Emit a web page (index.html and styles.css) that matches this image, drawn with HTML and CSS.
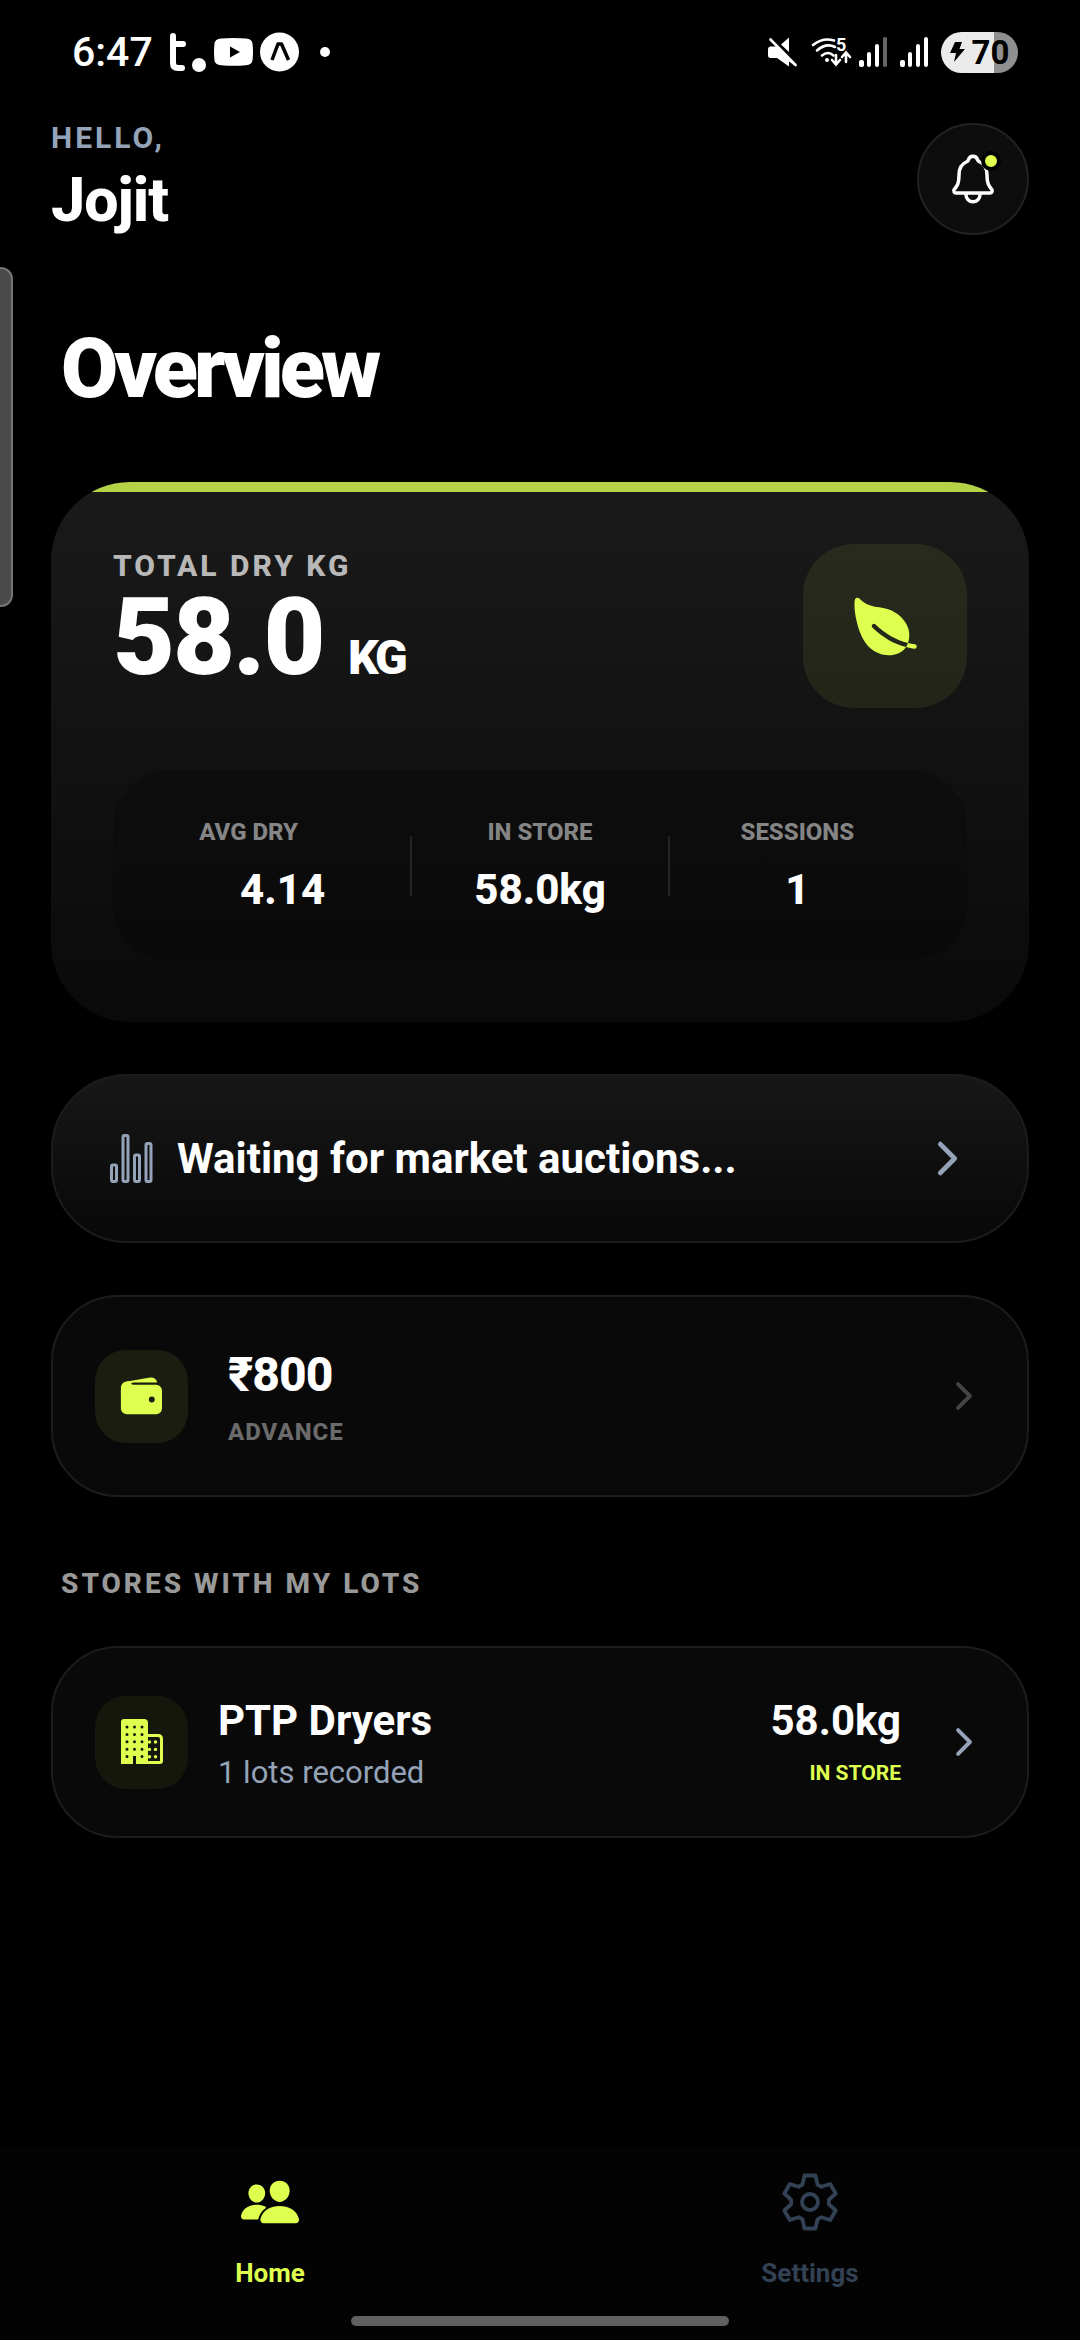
FILE: index.html
```html
<!DOCTYPE html>
<html lang="en">
<head>
<meta charset="utf-8">
<meta name="viewport" content="width=device-width, initial-scale=1">
<title>Overview</title>
<link rel="stylesheet" href="styles.css">
</head>
<body>
<div class="status">
  <div class="status-left">
    <span class="clock">6:47</span>
    <svg class="app-logo" width="39" height="40" viewBox="0 0 39 40" fill="none" stroke="#fff" stroke-width="6" stroke-linecap="round"><path d="M5 4v27q0 5 5 5h4M6 12h9"/><circle cx="31" cy="33" r="7" fill="#fff" stroke="none"/></svg>
    <svg width="39" height="40" viewBox="0 0 39 40"><path fill="#fff" d="M7 6.600Q19.500 5.400 32 6.600q6 0.400 6.500 5 1 8.400 0 17-0.500 4-6.500 4.700-12.500 1-25 0-6-0.700-6.500-4.700-1-8.600 0-17 0.500-4.600 6.500-5z"/><path d="M16 14.500v11l10-5.500z"/></svg>
    <svg width="39" height="40" viewBox="0 0 39 40"><circle cx="19.500" cy="20" r="19.500" fill="#fff"/><path d="M12 28l6-16h3.500l7 16" fill="none" stroke="#000" stroke-width="3.500" stroke-linejoin="round"/></svg>
    <span class="more-dot"></span>
  </div>
  <div class="status-right">
    <svg class="mute" width="30" height="30" viewBox="0 0 30 30"><path fill="#fff" d="M1 12q0-2 2-2.500h7.500l17 19L22 24.500V29.500L10 21H3q-2-.5-2-2.500zM14 7.500L22 .5V15z"/><path d="M3.500 2.500L28.500 28" stroke="#fff" stroke-width="2.600" stroke-linecap="round"/></svg>
    <svg class="wifi" width="40" height="30" viewBox="0 0 40 30" fill="none" stroke="#fff" stroke-width="2.600" stroke-linecap="round"><path d="M2 8Q12 0 23 3.500M6 13.500q9-8 18-3.500M11 18.500q6-5 11.500 0"/><circle cx="16" cy="23" r="2" fill="#fff" stroke="none"/><path d="M25 18v9m-4-4l4 4.500 4-4.500M35 25v-9m-4 4l4-4.500 4 4.500"/><text x="25" y="14" fill="#fff" stroke="none">5</text></svg>
    <svg class="signal" width="29" height="30" viewBox="0 0 29 30" fill="#fff"><rect y="23" width="5" height="7" rx="2"/><rect x="8" y="15" width="4" height="15" rx="2"/><rect x="16" y="7" width="4" height="23" rx="2"/><rect x="24" width="4" height="30" rx="2" fill="#666"/></svg>
    <svg class="signal" width="29" height="30" viewBox="0 0 29 30" fill="#fff"><rect y="23" width="5" height="7" rx="2"/><rect x="8" y="15" width="4" height="15" rx="2"/><rect x="16" y="7" width="4" height="23" rx="2"/><rect x="24" width="4" height="30" rx="2"/></svg>
    <span class="battery"><svg width="15" height="22" viewBox="0 0 15 22"><path d="M5 1h7L9.500 8H15L4 21l2-9H0z"/></svg>70</span>
  </div>
</div>

<main class="screen">
  <header class="header">
    <div class="heading">
      <div class="greeting">HELLO,</div>
      <div class="user">Jojit</div>
    </div>
    <button class="bell" type="button" aria-label="Notifications">
      <svg width="56" height="56" viewBox="0 0 512 512" fill="none" stroke="#fff" stroke-width="32" stroke-linecap="round" stroke-linejoin="round"><path d="M427.680 351.430C402 320 383.870 304 383.870 217.350 383.870 138 343.350 109.730 310 96c-4.430-1.820-8.600-6-9.950-10.550C294.200 65.540 277.800 48 256 48s-38.210 17.550-44 37.470c-1.350 4.600-5.520 8.710-9.950 10.530-33.390 13.750-73.870 41.920-73.870 121.350C128.130 304 110 320 84.320 351.430 73.680 364.450 83 384 101.610 384h308.880c18.510 0 27.770-19.610 17.190-32.570zM320 384v16a64 64 0 01-128 0v-16"/></svg>
      <span class="bell-dot"></span>
    </button>
  </header>

  <h1 class="title">Overview</h1>

  <section class="summary">
    <div class="summary-top">
      <div class="heading">
        <div class="label">TOTAL DRY KG</div>
        <div class="total">58.0 <span class="unit">KG</span></div>
      </div>
      <div class="leaf">
        <svg width="71" height="71" viewBox="0 0 512 512" fill="#dfff4f"><path d="M161.350 242a16 16 0 0122.620-.68c73.630 69.360 147.510 111.560 234.450 133.070 11.730-32 12.770-67.220 2.640-101.580-13.440-45.590-44.740-85.310-90.490-114.860-40.840-26.380-81.660-33.250-121.150-39.890-49.820-8.380-96.880-16.300-141.790-63.850-5-5.260-11.810-7.370-18.320-5.660-7.440 2-12.430 7.880-14.820 17.600-5.600 22.750-2 86.510 13.750 153.820 25.290 108.140 65.650 162.860 95.060 189.730 38 34.690 87.620 53.900 136.930 53.900a186 186 0 0027.770-2.040c41.710-6.320 76.430-27.270 96-57.750-89.490-23.280-165.940-67.550-242-139.160a16 16 0 01-.65-22.650zM467.430 384.190c-16.830-2.590-33.130-5.840-49-9.770a157.710 157.710 0 01-12.130 25.680c-.73 1.250-1.500 2.490-2.290 3.710a584.210 584.210 0 0058.560 12 16 16 0 104.870-31.620z"/></svg>
      </div>
    </div>
    <div class="stats">
      <div class="stat"><span class="stat-label with-slot">AVG DRY</span><span class="stat-value">4.14</span></div>
      <span class="rule"></span>
      <div class="stat"><span class="stat-label">IN STORE</span><span class="stat-value">58.0kg</span></div>
      <span class="rule"></span>
      <div class="stat"><span class="stat-label">SESSIONS</span><span class="stat-value">1</span></div>
    </div>
  </section>

  <a class="card market" href="#market">
    <svg width="49" height="49" viewBox="0 0 49 49" fill="none" stroke="#94a3b8" stroke-width="3"><rect x="4.500" y="31" width="5" height="16.500" rx="1.500"/><rect x="16" y="1.500" width="5" height="46" rx="1.500"/><rect x="27.500" y="21" width="5" height="26.500" rx="1.500"/><rect x="39" y="9.500" width="5" height="38" rx="1.500"/></svg>
    <span class="market-text">Waiting for market auctions...</span>
    <svg width="51" height="51" viewBox="0 0 512 512" class="chevron"><path d="M184 112l144 144-144 144"/></svg>
  </a>

  <a class="card advance" href="#advance">
    <span class="tile">
      <svg width="47" height="47" viewBox="0 0 512 512" fill="#dfff4f"><path d="M95.500 104h320a87.730 87.730 0 0111.180.71 66 66 0 00-77.510-55.560L86 94.080h-.3a66 66 0 00-41.070 26.130A87.570 87.570 0 0195.500 104zM415.500 128h-320a64.070 64.070 0 00-64 64v192a64.070 64.070 0 0064 64h320a64.070 64.070 0 0064-64V192a64.070 64.070 0 00-64-64zM368 320a32 32 0 1132-32 32 32 0 01-32 32z"/><path d="M32 259.500V160c0-21.670 12-58 53.650-65.870C121 87.500 156 87.500 156 87.500s23 16 4 16-18.500 24.500 0 24.500 0 23.500 0 23.500L85.500 236z"/></svg>
    </span>
    <span class="card-body">
      <span class="amount">₹800</span>
      <span class="amount-label">ADVANCE</span>
    </span>
    <svg width="42" height="42" viewBox="0 0 512 512" class="chevron dim"><path d="M184 112l144 144-144 144"/></svg>
  </a>

  <h2 class="section-title">STORES WITH MY LOTS</h2>

  <a class="card store" href="#store">
    <span class="tile tile-dark">
      <svg width="42" height="46" viewBox="0 0 42 46"><path fill="#dfff4f" d="M3 0h20q4 0 4 4v11h10q5 0 5 5v22q0 3-3 3H15v-8h-3v8H0V3q0-3 3-3z"/><path fill="#15170c" d="M27 18h10q2 0 2 2v22H27z"/><path stroke="#15170c" stroke-width="3" stroke-linecap="round" stroke-dasharray="0 7.400" d="M6 8v31M13.500 8v23M21 8v31"/><path stroke="#dfff4f" stroke-width="3.400" stroke-linecap="round" stroke-dasharray="0 7.400" d="M28.500 23v16M34.500 23v16"/></svg>
    </span>
    <span class="card-body">
      <span class="store-name">PTP Dryers</span>
      <span class="store-sub">1 lots recorded</span>
    </span>
    <span class="store-qty">
      <span class="store-name">58.0kg</span>
      <span class="store-state">IN STORE</span>
    </span>
    <svg width="42" height="42" viewBox="0 0 512 512" class="chevron"><path d="M184 112l144 144-144 144"/></svg>
  </a>
</main>

<footer class="bottom">
  <nav class="tabs">
    <a class="tab active" href="#home">
      <svg width="62" height="62" viewBox="0 0 512 512" fill="currentColor"><path d="M336 256c-20.560 0-40.440-9.180-56-25.840-15.130-16.250-24.370-37.920-26-61-1.740-24.620 5.770-47.260 21.140-63.760S312 80 336 80c23.830 0 45.380 9.060 60.700 25.520 15.470 16.620 23 39.220 21.260 63.630-1.670 23.110-10.900 44.770-26 61C376.440 246.820 356.570 256 336 256zM467.830 432H204.180a27.710 27.710 0 01-22-10.670 30.220 30.220 0 01-5.260-25.790c8.420-33.810 29.280-61.850 60.320-81.080C264.790 297.400 299.860 288 336 288c36.850 0 71 9 98.710 26.050 31.110 19.130 52 47.330 60.380 81.550a30.270 30.270 0 01-5.320 25.780A27.680 27.680 0 01467.830 432zM147 260c-35.190 0-66.130-32.720-69-72.930-1.420-20.600 5-39.650 18-53.620 12.860-13.830 31-21.450 51-21.450s38 7.660 50.930 21.570c13.100 14.080 19.500 33.090 18 53.520-2.870 40.200-33.800 72.910-68.930 72.910zM212.660 291.450c-17.590-8.600-40.420-12.900-65.650-12.900-29.460 0-58.070 7.680-80.570 21.620-25.510 15.830-42.670 38.880-49.600 66.710a27.390 27.390 0 004.790 23.360A25.320 25.320 0 0041.720 400h111a8 8 0 007.870-6.570c.11-.63.25-1.260.41-1.880 8.480-34.060 28.350-62.840 57.710-83.820a8 8 0 00-.63-13.390c-1.570-.92-3.370-1.890-5.420-2.890z"/></svg>
      Home
    </a>
    <a class="tab" href="#settings">
      <svg width="62" height="62" viewBox="-31 -31 62 62" fill="none" stroke="currentColor" stroke-width="3.800" stroke-linejoin="round"><path d="M-7.500-17.500L-5.500-26.500H5.500L7.500-17.500L11.400-15.200L20.200-18L25.700-8.500L18.900-2.250V2.250L25.700 8.500L20.200 18L11.400 15.200L7.500 17.500L5.500 26.500H-5.500L-7.500 17.500L-11.400 15.200L-20.200 18L-25.700 8.500L-18.900 2.250V-2.250L-25.700-8.500L-20.200-18L-11.400-15.200z"/><circle r="8"/></svg>
      Settings
    </a>
  </nav>
  <div class="home-pill"></div>
</footer>
<div class="edge-handle"></div>
</body>
</html>
```
FILE: styles.css
```css
* { box-sizing: border-box; }

body {
  margin: 0;
  min-height: 100vh;
  display: flex;
  flex-direction: column;
  background: #000;
  color: #fff;
  font-family: Roboto, "Noto Sans", sans-serif;
}

svg { display: block; flex: none; }
a { color: inherit; text-decoration: none; }

/* Status bar */
.status {
  height: 104px;
  padding: 0 62px 0 72px;
  display: flex;
  align-items: center;
  justify-content: space-between;
}
.status-left, .status-right { display: flex; align-items: center; }
.status-left { gap: 7px; }
.clock { font-size: 41px; font-weight: 500; line-height: 48px; }
.app-logo { margin-left: 8px; }
.more-dot { width: 10px; height: 10px; margin-left: 14px; border-radius: 50%; background: #fff; }
.status-right { gap: 12px; }
.mute { margin-right: 2px; }
.wifi { margin-right: -4px; overflow: visible; }
.wifi text { font-size: 18px; font-weight: 700; }
.battery {
  width: 77px;
  height: 41px;
  border-radius: 21px;
  background: linear-gradient(to right, #ebebeb 53px, #8f8f8f 53px);
  color: #000;
  display: flex;
  align-items: center;
  justify-content: center;
  gap: 7px;
  font-size: 33px;
  font-weight: 700;
}

/* Page */
.screen { flex: 1; padding: 12px 51px 51px; }
.header { display: flex; align-items: center; justify-content: space-between; }
.heading { padding-top: 1px; }
.greeting { font-size: 30px; line-height: 42px; font-weight: 700; letter-spacing: 3px; color: #94a3b8; }
.user { font-size: 61px; line-height: 82px; font-weight: 800; letter-spacing: -1px; }
.bell {
  position: relative;
  width: 112px;
  height: 112px;
  padding: 0;
  border: 2px solid #222;
  border-radius: 50%;
  background: #0d0d0d;
  display: flex;
  align-items: center;
  justify-content: center;
}
.bell-dot {
  position: absolute;
  top: 26px;
  right: 26px;
  width: 20px;
  height: 20px;
  border: 4px solid #000;
  border-radius: 50%;
  background: #dfff4f;
}
.title { margin: 78px 10px 63px; font-size: 83px; line-height: 100px; font-weight: 900; letter-spacing: -4px; }

.summary {
  padding: 62px;
  border-radius: 79px;
  overflow: hidden;
  background: linear-gradient(#b6d347, #b6d347) top / 100% 10px no-repeat, linear-gradient(#1a1a1a, #0a0a0a);
}
.summary-top { display: flex; justify-content: space-between; }
.label { font-size: 30px; line-height: 42px; font-weight: 800; letter-spacing: 3px; color: #b8b8b8; }
.total { font-size: 107px; line-height: 102px; font-weight: 900; letter-spacing: -2px; }
.unit { font-size: 48px; line-height: 48px; letter-spacing: -3px; }
.leaf {
  width: 164px;
  height: 164px;
  border-radius: 51px;
  background: rgba(223, 255, 79, 0.08);
  display: flex;
  align-items: center;
  justify-content: center;
}
.stats {
  margin-top: 62px;
  padding: 43px 42px 41px;
  border-radius: 56px;
  background: rgba(0, 0, 0, 0.2);
  display: grid;
  grid-template-columns: 1fr 2px 1fr 2px 1fr;
  align-items: center;
}
.stat { display: flex; flex-direction: column; align-items: center; gap: 10px; }
.stat-label { font-size: 24px; line-height: 38px; font-weight: 800; color: #858585; }
.with-slot { padding-right: 68px; }
.stat-value { font-size: 42px; line-height: 58px; font-weight: 800; }
.rule { height: 60px; background: #242424; }

/* Cards */
.card {
  display: flex;
  align-items: center;
  margin-top: 52px;
  padding: 42px;
  border: 2px solid #1c1c1c;
  border-radius: 67px;
  background: #090909;
}
.market { gap: 21px; padding: 57px 54px; border-radius: 76px; background: linear-gradient(#171717, #080808); }
.market-text { flex: 1; font-size: 42px; line-height: 49px; font-weight: 700; }
.card-body { flex: 1; display: flex; flex-direction: column; }
.tile {
  width: 93px;
  height: 93px;
  border-radius: 31px;
  background: #1b1d11;
  display: flex;
  align-items: center;
  justify-content: center;
}
.tile-dark { background: #15170c; }
.advance { gap: 40px; }
.amount { font-size: 48px; line-height: 72px; font-weight: 800; letter-spacing: -1px; }
.amount-label { font-size: 24px; line-height: 42px; font-weight: 800; letter-spacing: 1px; color: #6b6b6b; }
.chevron { fill: none; stroke: #94a3b8; stroke-width: 48; stroke-linecap: round; stroke-linejoin: round; }
.dim { stroke: #444; }
.section-title { margin: 65px 10px 40px; font-size: 28px; line-height: 44px; font-weight: 800; letter-spacing: 3px; color: #999; }
.store { gap: 30px; margin-top: 0; }
.store-name { font-size: 42px; line-height: 62px; font-weight: 700; }
.store-sub { font-size: 31px; line-height: 42px; color: #94a3b8; }
.store-qty { display: flex; flex-direction: column; align-items: flex-end; margin-right: 12px; }
.store-state { font-size: 21px; line-height: 42px; font-weight: 700; color: #dfff4f; }

/* Bottom tabs */
.bottom { background: #030303; padding: 24px 0 14px; }
.tabs { display: flex; }
.tab {
  flex: 1;
  display: flex;
  flex-direction: column;
  align-items: center;
  gap: 20px;
  font-size: 26px;
  line-height: 40px;
  font-weight: 700;
  color: #334155;
}
.active { color: #dfff4f; }
.home-pill { width: 35%; height: 10px; margin: 23px auto 0; border-radius: 5px; background: #606060; }

/* Edge panel handle floating over the page */
.edge-handle {
  position: absolute;
  left: 0;
  top: 267px;
  width: 13px;
  height: 340px;
  border: 2px solid #757575;
  border-left: 0;
  border-radius: 0 12px 12px 0;
  background: #4a4a4a;
}
```
